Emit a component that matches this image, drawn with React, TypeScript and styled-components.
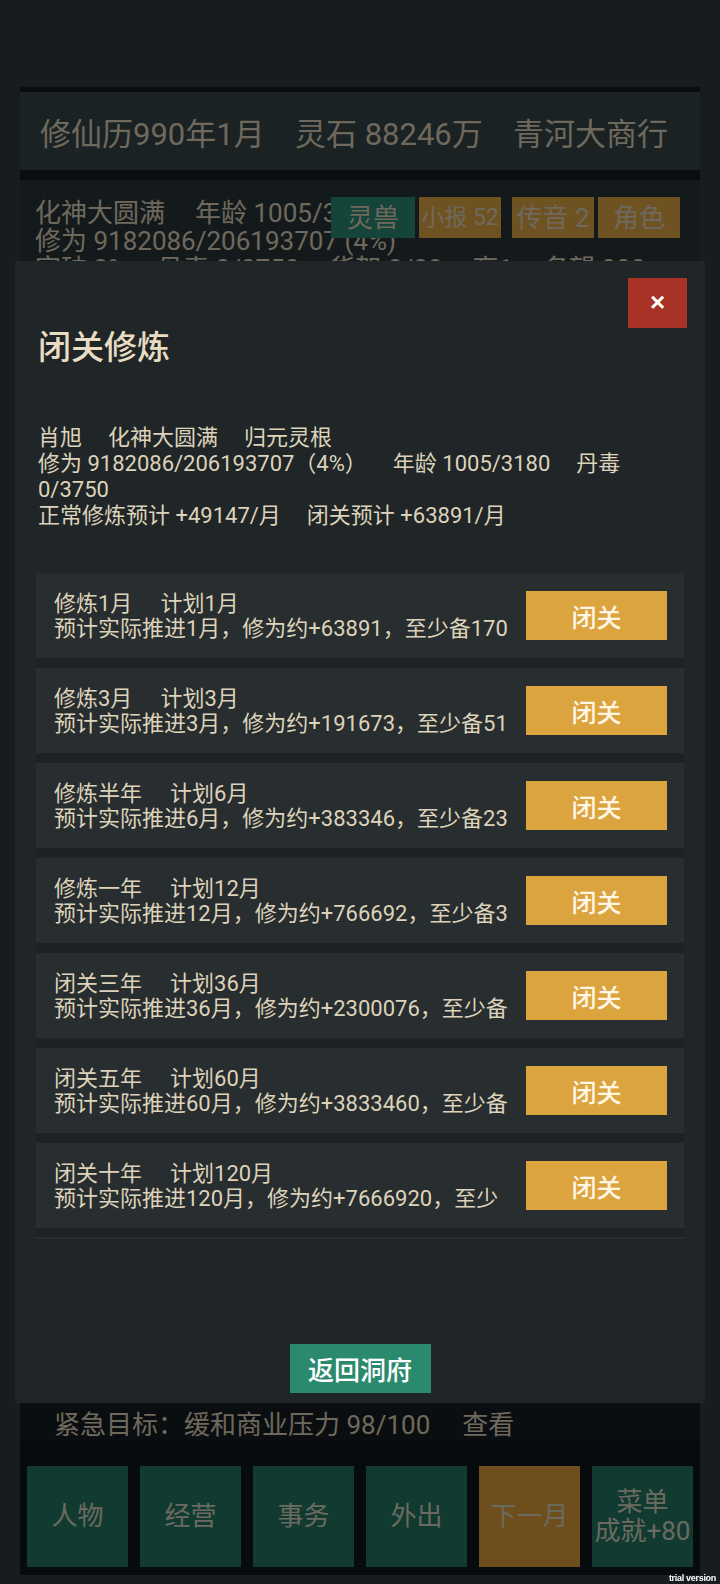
import React from 'react';
import styled, { createGlobalStyle } from 'styled-components';

const GlobalStyle = createGlobalStyle`
  html, body {
    margin: 0;
    padding: 0;
  }
  body {
    width: 720px;
    height: 1584px;
    overflow: hidden;
    background: #2c383e;
    font-family: Roboto, 'Noto Sans CJK SC', sans-serif;
  }
  * {
    box-sizing: border-box;
  }
`;

const rows = [
  { name: '修炼1月', plan: '计划1月', desc: '预计实际推进1月，修为约+63891，至少备170' },
  { name: '修炼3月', plan: '计划3月', desc: '预计实际推进3月，修为约+191673，至少备51' },
  { name: '修炼半年', plan: '计划6月', desc: '预计实际推进6月，修为约+383346，至少备23' },
  { name: '修炼一年', plan: '计划12月', desc: '预计实际推进12月，修为约+766692，至少备3' },
  { name: '闭关三年', plan: '计划36月', desc: '预计实际推进36月，修为约+2300076，至少备' },
  { name: '闭关五年', plan: '计划60月', desc: '预计实际推进60月，修为约+3833460，至少备' },
  { name: '闭关十年', plan: '计划120月', desc: '预计实际推进120月，修为约+7666920，至少' },
];

const navItems = ['人物', '经营', '事务', '外出', '下一月'];

const App = () => {
  return (
    <>
      <GlobalStyle />
      <Page>
        <TopBar>
          <span>修仙历990年1月</span>
          <span>灵石 88246万</span>
          <span>青河大商行</span>
        </TopBar>
        <StatusPanel>
          <StatusLine>
            <Item>化神大圆满</Item>
            <Item>年龄 1005/3180</Item>
          </StatusLine>
          <StatusLine>
            <Item>修为 9182086/206193707 (4%)</Item>
          </StatusLine>
          <StatusLine>
            <Item>突破 3%</Item>
            <Item>丹毒 0/3750</Item>
            <Item>货架 0/30</Item>
            <Item>商1</Item>
            <Item>名望 300</Item>
          </StatusLine>
          <StatusButtons>
            <StatusButton tone="green">灵兽</StatusButton>
            <StatusButton tone="gold" small>小报 52</StatusButton>
            <StatusButton tone="gold" wide>传音 2</StatusButton>
            <StatusButton tone="gold">角色</StatusButton>
          </StatusButtons>
        </StatusPanel>
        <GoalBar>
          <Item>紧急目标：缓和商业压力 98/100</Item>
          <Item>查看</Item>
        </GoalBar>
        <Nav>
          {navItems.map((n) => (
            <NavButton key={n} tone={n === '下一月' ? 'gold' : 'green'}>
              {n}
            </NavButton>
          ))}
          <NavButton tone="green">
            菜单
            <br />
            成就+80
          </NavButton>
        </Nav>
      </Page>

      <Overlay>
        <Modal>
          <CloseRow>
            <CloseButton>×</CloseButton>
          </CloseRow>
          <Title>闭关修炼</Title>
          <Info>
            <div>
              <Item>肖旭</Item>
              <Item>化神大圆满</Item>
              <Item>归元灵根</Item>
            </div>
            <div>
              <Item>修为 9182086/206193707（4%）</Item>
              <Item>年龄 1005/3180</Item>
              <Item>丹毒</Item>
            </div>
            <div>0/3750</div>
            <div>
              <Item>正常修炼预计 +49147/月</Item>
              <Item>闭关预计 +63891/月</Item>
            </div>
          </Info>
          <List>
            {rows.map((r) => (
              <Row key={r.name}>
                <RowText>
                  <div>
                    <Item>{r.name}</Item>
                    <Item>{r.plan}</Item>
                  </div>
                  <div>{r.desc}</div>
                </RowText>
                <RowButton>闭关</RowButton>
              </Row>
            ))}
          </List>
          <Spacer />
          <ReturnButton>返回洞府</ReturnButton>
        </Modal>
      </Overlay>
      <Watermark>trial version</Watermark>
    </>
  );
};

const Page = styled.div`
  height: 1584px;
  display: flex;
  flex-direction: column;
  padding: 87px 20px 9px;
  color: #dcd2b8;
`;

const Item = styled.span`
  & + & {
    margin-left: 26px;
  }
`;

const TopBar = styled.div`
  height: 93px;
  flex-shrink: 0;
  border-top: 5px solid #141c20;
  border-bottom: 10px solid #141c20;
  background: #344448;
  display: flex;
  align-items: center;
  justify-content: space-between;
  padding: 0 32px 0 20px;
  font-size: 31px;
  white-space: nowrap;
`;

const StatusPanel = styled.div`
  position: relative;
  flex: 1;
  background: #283438;
  padding: 19px 15px;
  font-size: 26px;
  line-height: 28px;
  overflow: hidden;
`;

const StatusLine = styled.div`
  white-space: nowrap;
  ${Item} + ${Item} {
    margin-left: 30px;
  }
`;

const StatusButtons = styled.div`
  position: absolute;
  top: 17px;
  right: 20px;
  display: flex;
  gap: 4px;
`;

const StatusButton = styled.div<{ tone: 'green' | 'gold'; small?: boolean; wide?: boolean }>`
  height: 41px;
  width: ${(p) => (p.tone === 'green' ? 84 : 82)}px;
  margin-left: ${(p) => (p.wide ? 7 : 0)}px;
  background: ${(p) => (p.tone === 'green' ? '#2a8874' : '#dca444')};
  color: #dcd2b8;
  font-size: ${(p) => (p.small ? 23 : 26)}px;
  display: flex;
  align-items: center;
  justify-content: center;
  white-space: nowrap;
`;

const GoalBar = styled.div`
  height: 56px;
  flex-shrink: 0;
  background: #161c20;
  display: flex;
  align-items: center;
  padding: 20px 0 0 34px;
  font-size: 26px;
  ${Item} + ${Item} {
    margin-left: 32px;
  }
`;

const Nav = styled.div`
  height: 135px;
  flex-shrink: 0;
  background: #10161a;
  display: flex;
  gap: 12px;
  padding: 26px 7px 8px;
`;

const NavButton = styled.div<{ tone: 'green' | 'gold' }>`
  flex: 1;
  background: ${(p) => (p.tone === 'green' ? '#227462' : '#dc9c38')};
  color: #d6d4c0;
  font-size: 26px;
  line-height: 29px;
  display: flex;
  align-items: center;
  justify-content: center;
  text-align: center;
`;

const Overlay = styled.div`
  position: fixed;
  inset: 0;
  background: rgba(0, 0, 0, 0.5);
  padding: 261px 15px 181px;
  display: flex;
`;

const Modal = styled.div`
  flex: 1;
  display: flex;
  flex-direction: column;
  background: #202628;
  padding: 17px 21px 10px;
  color: #ddd3ba;
`;

const CloseRow = styled.div`
  display: flex;
  justify-content: flex-end;
`;

const CloseButton = styled.button`
  width: 59px;
  height: 50px;
  margin-right: -3px;
  border: none;
  background: #a93226;
  color: #ffffff;
  font-family: 'Liberation Sans', sans-serif;
  font-size: 26px;
  font-weight: 700;
  display: flex;
  align-items: center;
  justify-content: center;
  padding: 0 0 2px;
`;

const Title = styled.div`
  font-size: 33px;
  line-height: 40px;
  font-weight: 500;
  padding-left: 2px;
  color: #e8ddc2;
`;

const Info = styled.div`
  margin-top: 57px;
  padding-left: 2px;
  font-size: 22px;
  line-height: 26px;
  white-space: nowrap;
`;

const List = styled.div`
  margin-top: 44px;
  display: flex;
  flex-direction: column;
  gap: 10px;
  background: #1d2224;
  padding-bottom: 9px;
  border-bottom: 2px solid #2a3032;
`;

const Row = styled.div`
  height: 85px;
  display: flex;
  align-items: center;
  gap: 12px;
  padding: 0 17px 0 18px;
  background: #282d2f;
`;

const RowText = styled.div`
  flex: 1;
  min-width: 0;
  font-size: 22px;
  line-height: 25px;
  white-space: nowrap;
  overflow: hidden;
  ${Item} + ${Item} {
    margin-left: 28px;
  }
`;

const RowButton = styled.button`
  width: 141px;
  height: 49px;
  flex-shrink: 0;
  border: none;
  background: #dca43e;
  color: #fff6e6;
  font-family: Roboto, 'Noto Sans CJK SC', sans-serif;
  font-size: 25px;
  font-weight: 500;
`;

const Spacer = styled.div`
  flex: 1;
`;

const ReturnButton = styled.button`
  align-self: center;
  width: 141px;
  height: 49px;
  border: none;
  background: #2b8a6e;
  color: #ffffff;
  font-family: Roboto, 'Noto Sans CJK SC', sans-serif;
  font-size: 26px;
  font-weight: 500;
`;

const Watermark = styled.div`
  position: fixed;
  right: 4px;
  bottom: 1px;
  font-family: 'Liberation Sans', sans-serif;
  font-size: 9px;
  font-weight: 700;
  letter-spacing: -0.3px;
  color: #ffffff;
`;

export default App;
